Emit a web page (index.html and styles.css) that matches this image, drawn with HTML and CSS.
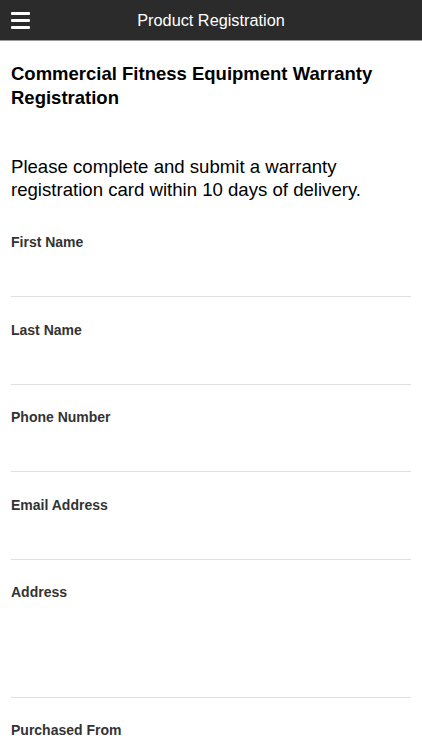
FILE: index.html
```html
<!DOCTYPE html>
<html lang="en">
<head>
<meta charset="UTF-8" />
<meta name="viewport" content="width=device-width, initial-scale=1" />
<title>Product Registration</title>
<link rel="stylesheet" href="styles.css">
</head>
<body>
  <header class="topbar">
    <button class="menu-btn" aria-label="Menu">
      <span></span><span></span><span></span>
    </button>
    <div class="topbar-title">Product Registration</div>
  </header>

  <main class="content">
    <h1>Commercial Fitness Equipment Warranty Registration</h1>
    <p class="intro">Please complete and submit a warranty registration card within 10 days of delivery.</p>

    <div class="field">
      <label for="firstName">First Name</label>
      <input type="text" id="firstName" />
    </div>
    <div class="field">
      <label for="lastName">Last Name</label>
      <input type="text" id="lastName" />
    </div>
    <div class="field">
      <label for="phone">Phone Number</label>
      <input type="tel" id="phone" />
    </div>
    <div class="field">
      <label for="email">Email Address</label>
      <input type="email" id="email" />
    </div>
    <div class="field">
      <label for="address">Address</label>
      <textarea id="address"></textarea>
    </div>
    <div class="field">
      <label for="purchasedFrom">Purchased From</label>
      <input type="text" id="purchasedFrom" />
    </div>
  </main>
</body>
</html>
```

FILE: styles.css
```css
/* plain form page, iOS-ish look */
body {
  margin: 0;
  font-family: "Liberation Sans", Arial, sans-serif;
  background: #fff;
  color: #000;
}
.topbar {
  height: 40px;
  background: #2b2b2b;
  border-bottom: 1px solid #9a9a9a;
  display: flex;
  align-items: center;
  justify-content: center;
  position: relative;
}
.menu-btn {
  position: absolute;
  left: 11px;
  top: 12px;
  width: 19px;
  height: 17px;
  padding: 0;
  border: none;
  background: none;
  display: flex;
  flex-direction: column;
  justify-content: space-between;
}
.menu-btn span {
  display: block;
  height: 3px;
  background: #fff;
  border-radius: 1px;
}
.topbar-title {
  color: #fff;
  font-size: 16.3px;
}
.content {
  padding: 0 11px;
}
h1 {
  font-size: 18.5px;
  font-weight: 700;
  line-height: 24px;
  margin: 21px 0 0;
}
.intro {
  font-size: 18.6px;
  line-height: 23px;
  margin: 45px 0 0;
}
.field {
  border-bottom: 1px solid #e0e0e0;
  margin-top: 23.5px;
}
.intro + .field {
  margin-top: 32px;
}
.field label {
  display: block;
  font-size: 14px;
  font-weight: 700;
  color: #333;
  line-height: 18px;
}
.field input,
.field textarea {
  display: block;
  width: 100%;
  height: 45px;
  border: none;
  padding: 0;
  font-size: 16px;
  font-family: inherit;
  outline: none;
  resize: none;
  box-sizing: border-box;
}
.field textarea {
  height: 95.5px;
}
```
